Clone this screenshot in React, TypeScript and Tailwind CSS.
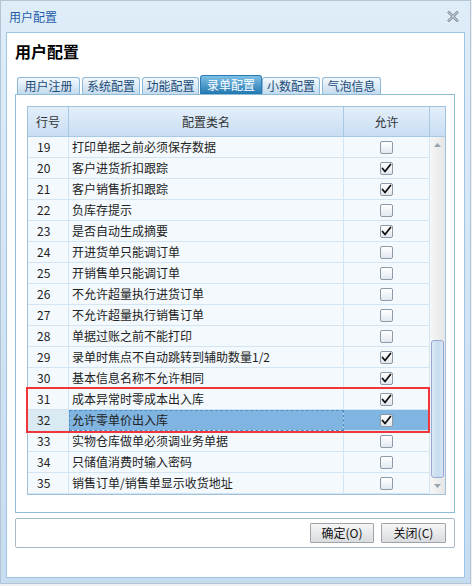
import React from "react";

const rows: [number, string, boolean][] = [
  [19, "打印单据之前必须保存数据", false],
  [20, "客户进货折扣跟踪", true],
  [21, "客户销售折扣跟踪", true],
  [22, "负库存提示", false],
  [23, "是否自动生成摘要", true],
  [24, "开进货单只能调订单", false],
  [25, "开销售单只能调订单", false],
  [26, "不允许超量执行进货订单", false],
  [27, "不允许超量执行销售订单", false],
  [28, "单据过账之前不能打印", false],
  [29, "录单时焦点不自动跳转到辅助数量1/2", true],
  [30, "基本信息名称不允许相同", true],
  [31, "成本异常时零成本出入库", true],
  [32, "允许零单价出入库", true],
  [33, "实物仓库做单必须调业务单据", false],
  [34, "只储值消费时输入密码", false],
  [35, "销售订单/销售单显示收货地址", false],
];

function Check({ on }: { on: boolean }) {
  return (
    <div className="w-[13px] h-[13px] border border-[#8e9aa6] rounded-[2px] bg-gradient-to-b from-[#ffffff] to-[#e2e9f0] flex items-center justify-center">
      {on && (
        <svg width="11" height="11" viewBox="0 0 11 11">
          <path d="M1.5 5.5 L4 8.5 L9.5 1.5" fill="none" stroke="#111" strokeWidth="1.8" strokeLinecap="round" strokeLinejoin="round" />
        </svg>
      )}
    </div>
  );
}

function Tab({ label, w, active, ml }: { label: string; w: string; active?: boolean; ml: string }) {
  if (active)
    return (
      <div className={`${w} ${ml} h-[19px] border border-b-0 border-[#2c7cb3] rounded-t-[3px] bg-gradient-to-b from-[#7cc0e6] to-[#1f77b0] text-white flex items-center justify-center`}>
        {label}
      </div>
    );
  return (
    <div className={`${w} ${ml} mt-[2px] h-[17px] border border-b-0 border-[#8db8d6] rounded-t-[3px] bg-gradient-to-b from-[#f4f9fd] to-[#c3dbee] text-[#1d4c78] flex items-center justify-center`}>
      {label}
    </div>
  );
}

export default function App() {
  return (
    <div
      className="w-[472px] h-[586px] bg-[#eef1f4] text-[12px] leading-none"
      style={{ fontFamily: '"Noto Sans CJK SC", "Open Sans", sans-serif' }}
    >
      <div className="w-[471px] h-[584px] border border-[#b3c4d4] bg-gradient-to-b from-[#dfedf9] to-[#c6dcf1] flex flex-col px-[5px] pb-[5px]">
        <div className="h-[31px] flex items-center justify-between pl-[3px] pr-[6px]">
          <span className="text-[12px] text-[#1f5ea8]">用户配置</span>
          <svg width="12" height="11" viewBox="0 0 12 11">
            <path d="M2 1.5 L10 9.5 M10 1.5 L2 9.5" stroke="#7f8c9a" strokeWidth="2.6" strokeLinecap="square" />
            <path d="M2 1.5 L10 9.5 M10 1.5 L2 9.5" stroke="#eef2f6" strokeWidth="0.9" strokeLinecap="square" />
          </svg>
        </div>
        <div className="flex-1 border border-[#9fc5e4] bg-white flex flex-col pl-[8px] pr-[9px]">
          <div className="h-[36px] flex items-center text-[16px] font-bold text-black">用户配置</div>
          <div className="mt-[6px] flex h-[19px] text-[12px]">
            <Tab label="用户注册" w="w-[63px]" ml="ml-[2px]" />
            <Tab label="系统配置" w="w-[58px]" ml="ml-[2px]" />
            <Tab label="功能配置" w="w-[57px]" ml="ml-[2px]" />
            <Tab label="录单配置" w="w-[62px]" ml="ml-[1px]" active />
            <Tab label="小数配置" w="w-[58px]" ml="ml-[0px]" />
            <Tab label="气泡信息" w="w-[59px]" ml="ml-[2px]" />
          </div>
          <div className="border border-[#8fbcd8] pt-[11px] pl-[11px] pr-[8px] pb-[17px]">
            <div className="relative w-[419px] border border-[#a2c2dc] text-[#222]">
              <div className="flex h-[30px] bg-gradient-to-b from-[#e3effa] to-[#c9def3] text-[#333] border-b border-[#a9c9e3]">
                <div className="w-[41px] border-r border-[#a9c9e3] flex items-center justify-center">行号</div>
                <div className="w-[275px] border-r border-[#a9c9e3] flex items-center justify-center">配置类名</div>
                <div className="w-[86px] border-r border-[#a9c9e3] flex items-center justify-center">允许</div>
                <div className="w-[15px]" />
              </div>
              <div className="flex">
                <div className="flex flex-col w-[402px]">
                  {rows.map(([n, name, on]) => {
                    const sel = n === 32;
                    return (
                      <div key={n} className="flex h-[21px]">
                        <div className={`w-[41px] border-r border-b border-[#d3e5f3] flex items-center pl-[9px] ${sel ? "bg-[#d9eaf2]" : "bg-[#f4f9fd]"}`}>{n}</div>
                        <div className={`w-[275px] border-r border-b flex items-center pl-[3px] ${sel ? "bg-[#80b4e1] border-[#d3e5f3] outline-1 outline-dashed outline-[#4a90c8] -outline-offset-1" : "bg-[#f4f9fd] border-[#d3e5f3]"}`}>{name}</div>
                        <div className={`w-[86px] border-r border-b border-[#d3e5f3] flex items-center justify-center ${sel ? "bg-[#80b4e1]" : "bg-[#f4f9fd]"}`}>
                          <Check on={on} />
                        </div>
                      </div>
                    );
                  })}
                </div>
                <div className="w-[15px] flex flex-col bg-gradient-to-r from-[#f6f6f6] to-[#e6e6e6]">
                  <div className="h-[15px] flex items-center justify-center">
                    <svg width="7" height="4" viewBox="0 0 7 4"><path d="M0 4 L3.5 0 L7 4 Z" fill="#9aa4ae" /></svg>
                  </div>
                  <div className="h-[188px]" />
                  <div className="h-[138px] mx-[1px] rounded-[3px] border border-[#98a8d6] bg-gradient-to-r from-[#dde9f5] via-[#c6dcef] to-[#d5e5f3]" />
                  <div className="flex-1 flex items-center justify-center">
                    <svg width="7" height="4" viewBox="0 0 7 4"><path d="M0 0 L3.5 4 L7 0 Z" fill="#9aa4ae" /></svg>
                  </div>
                </div>
              </div>
              <div className="absolute left-[-2px] top-[280px] w-[404px] h-[46px] border-2 border-[#f0363a]" />
            </div>
          </div>
          <div className="mt-[5px] h-[30px] border border-[#a9b9c8] rounded-[2px] flex items-center justify-end pr-[8px] gap-[7px]">
            <button className="w-[64px] h-[20px] border border-[#9ea4aa] rounded-[1px] bg-gradient-to-b from-[#f6f6f6] to-[#d9dcdf] text-[12px] text-[#111] flex items-center justify-center">确定(O)</button>
            <button className="w-[65px] h-[20px] border border-[#9ea4aa] rounded-[1px] bg-gradient-to-b from-[#f6f6f6] to-[#d9dcdf] text-[12px] text-[#111] flex items-center justify-center">关闭(C)</button>
          </div>
        </div>
      </div>
    </div>
  );
}
